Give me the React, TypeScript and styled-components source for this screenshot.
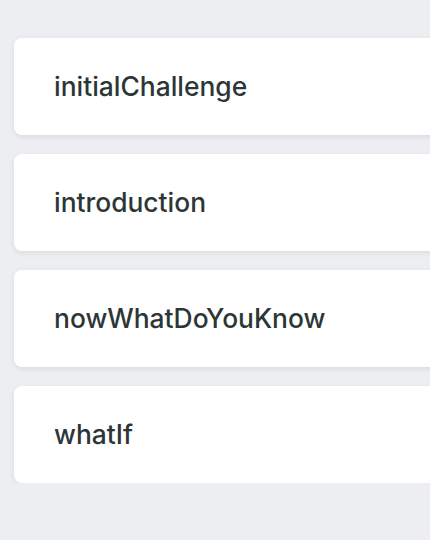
import React from "react";
import styled, { createGlobalStyle } from "styled-components";

const Global = createGlobalStyle`
  html, body {
    margin: 0;
    padding: 0;
    background: #edeef2;
    overflow: hidden;
  }
  body {
    font-family: Inter, "Noto Sans", sans-serif;
  }
`;

const List = styled.div`
  display: flex;
  flex-direction: column;
  gap: 19px;
  padding: 38px 0 0 14px;
  width: 560px;
`;

const Card = styled.div`
  height: 97px;
  display: flex;
  align-items: center;
  padding-left: 40px;
  background: #ffffff;
  border-radius: 8px;
  box-shadow: 0 2px 6px rgba(0, 0, 0, 0.08);
  box-sizing: border-box;
`;

const Label = styled.span`
  font-size: 26.4px;
  font-weight: 500;
  color: #2d3636;
  letter-spacing: 0;
  line-height: 1;
`;

const items = ["initialChallenge", "introduction", "nowWhatDoYouKnow", "whatIf"];

export default function App() {
  return (
    <>
      <Global />
      <List>
        {items.map((t) => (
          <Card key={t}>
            <Label>{t}</Label>
          </Card>
        ))}
      </List>
    </>
  );
}
